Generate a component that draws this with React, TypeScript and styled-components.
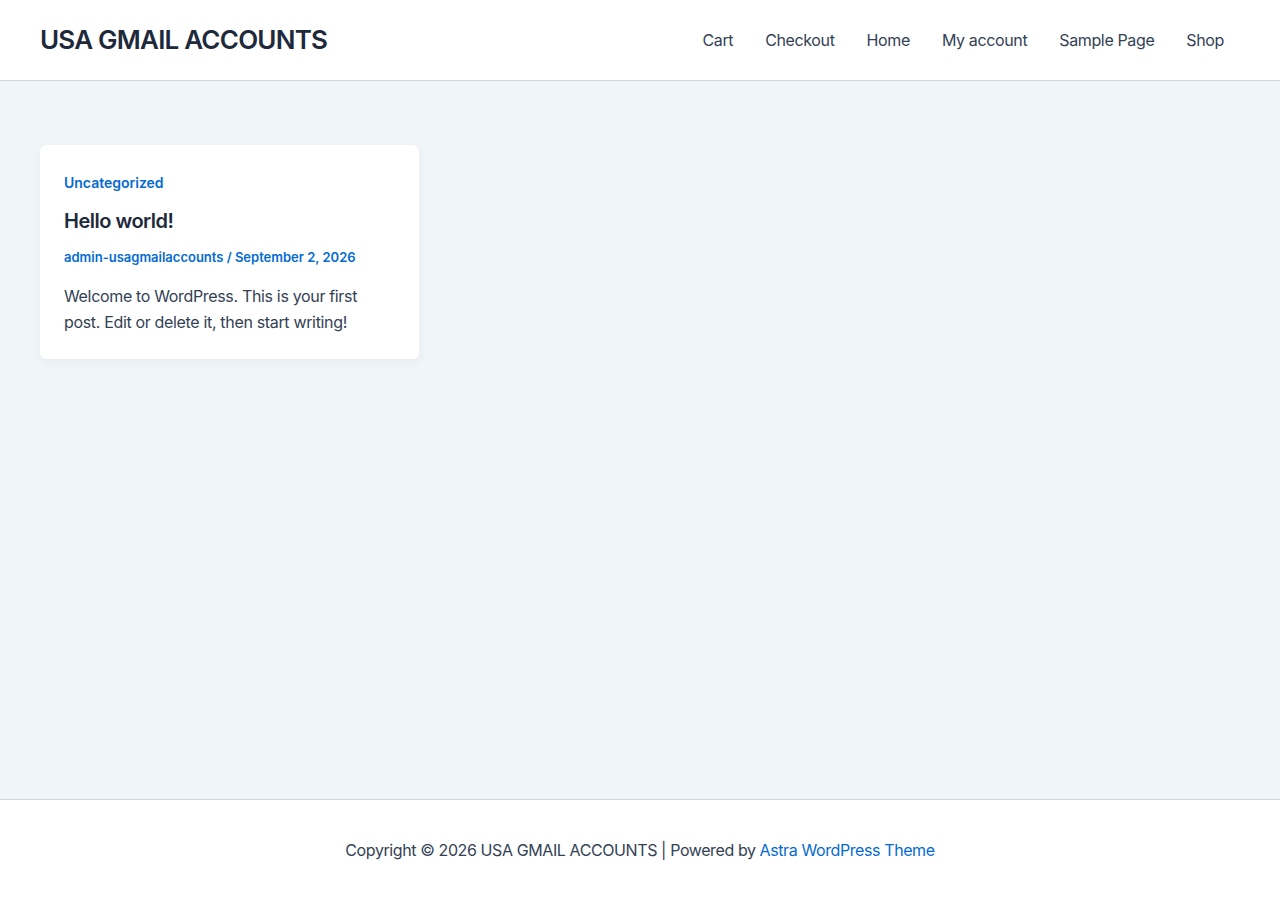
import styled, { createGlobalStyle } from "styled-components";

const GlobalStyle = createGlobalStyle`
  html, body {
    margin: 0;
    padding: 0;
  }
  body {
    font-family: Inter, "Noto Sans", sans-serif;
    color: #334155;
    background: #f0f5fa;
  }
  * { box-sizing: border-box; }
`;

const Page = styled.div`
  display: flex;
  flex-direction: column;
  min-height: 100vh;
`;

const Header = styled.header`
  height: 81px;
  background: #ffffff;
  border-bottom: 1px solid #d1d5db;
  display: flex;
  align-items: center;
  justify-content: space-between;
  padding: 0 40px;
`;

const SiteTitle = styled.a`
  font-size: 26px;
  font-weight: 600;
  letter-spacing: -0.03em;
  color: #1e293b;
  text-decoration: none;
  line-height: 1;
`;

const Nav = styled.nav`
  display: flex;
  align-items: center;
`;

const NavLink = styled.a`
  font-size: 16px;
  letter-spacing: -0.023em;
  color: #334155;
  text-decoration: none;
  padding: 0 16px;
`;

const Main = styled.main`
  flex: 1;
  padding: 64px 40px;
`;

const Grid = styled.div`
  display: grid;
  grid-template-columns: repeat(3, 1fr);
  gap: 32px;
  max-width: 1200px;
`;

const Card = styled.article`
  background: #ffffff;
  border-radius: 6px;
  padding: 28px 24px 24px;
  box-shadow: 0 4px 12px rgba(15, 23, 42, 0.04);
`;

const Category = styled.a`
  display: block;
  font-size: 14px;
  font-weight: 600;
  color: #046bd2;
  text-decoration: none;
  line-height: 20px;
`;

const PostTitle = styled.h2`
  margin: 14px 0 0;
  font-size: 20px;
  font-weight: 600;
  letter-spacing: -0.025em;
  color: #1e293b;
  line-height: 28px;
`;

const Meta = styled.div`
  margin-top: 12px;
  font-size: 13px;
  font-weight: 600;
  color: #046bd2;
  line-height: 20px;
`;

const Excerpt = styled.p`
  margin: 16px 0 0;
  font-size: 16px;
  letter-spacing: -0.021em;
  line-height: 26px;
  color: #334155;
`;

const Footer = styled.footer`
  height: 101px;
  background: #ffffff;
  border-top: 1px solid #d1d5db;
  display: flex;
  align-items: center;
  justify-content: center;
  font-size: 16px;
  letter-spacing: -0.025em;
  color: #334155;
`;

const FooterLink = styled.a`
  color: #046bd2;
  text-decoration: none;
  margin-left: 4px;
`;

const navItems = ["Cart", "Checkout", "Home", "My account", "Sample Page", "Shop"];

export default function App() {
  return (
    <Page>
      <GlobalStyle />
      <Header>
        <SiteTitle href="#">USA GMAIL ACCOUNTS</SiteTitle>
        <Nav>
          {navItems.map((item) => (
            <NavLink key={item} href="#">
              {item}
            </NavLink>
          ))}
        </Nav>
      </Header>
      <Main>
        <Grid>
          <Card>
            <Category href="#">Uncategorized</Category>
            <PostTitle>Hello world!</PostTitle>
            <Meta>admin-usagmailaccounts / September 2, 2026</Meta>
            <Excerpt>
              Welcome to WordPress. This is your first post. Edit or delete it, then start writing!
            </Excerpt>
          </Card>
        </Grid>
      </Main>
      <Footer>
        Copyright © 2026 USA GMAIL ACCOUNTS | Powered by
        <FooterLink href="#">Astra WordPress Theme</FooterLink>
      </Footer>
    </Page>
  );
}
